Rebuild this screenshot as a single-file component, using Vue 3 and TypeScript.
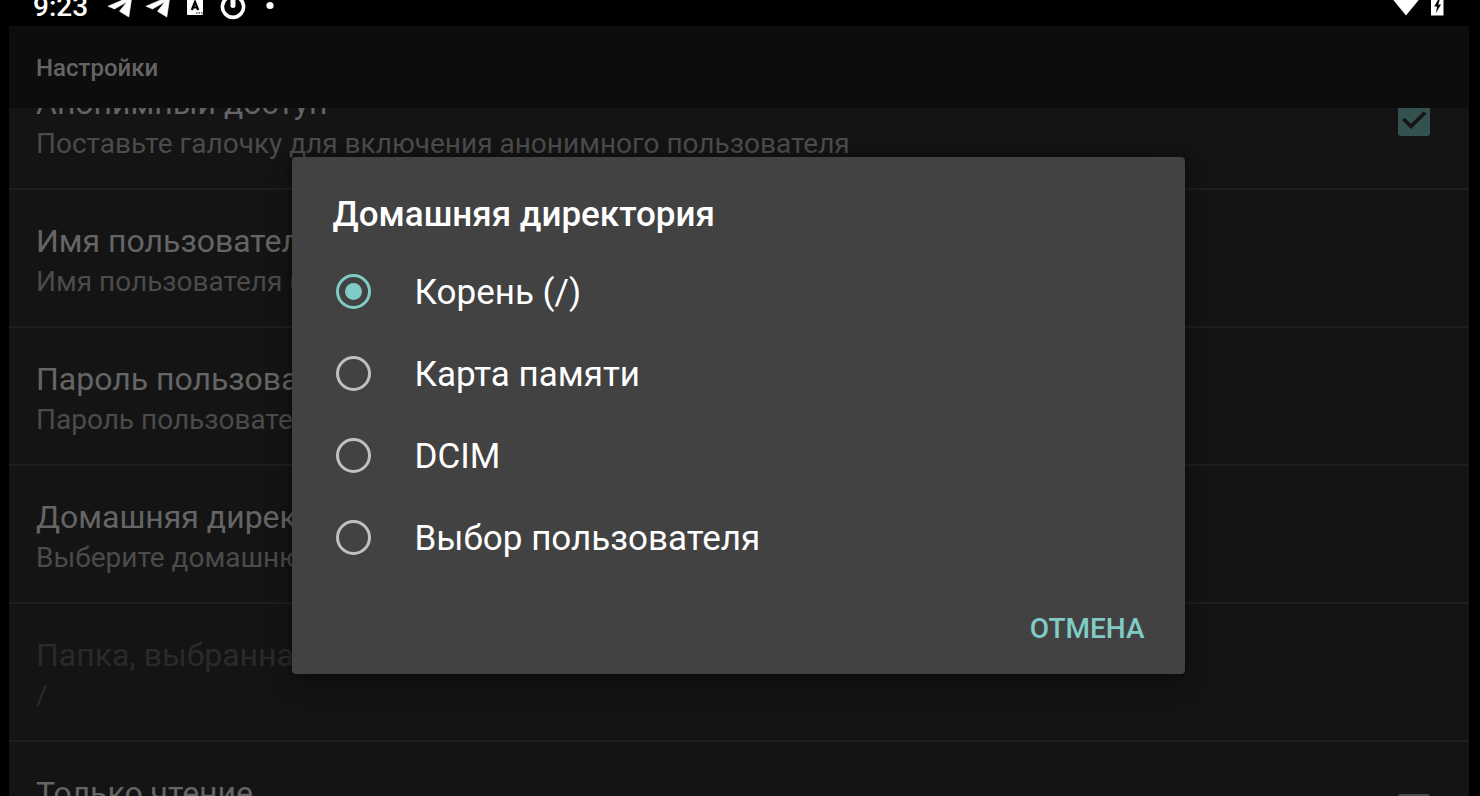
<script setup lang="ts">
import { ref } from 'vue'

interface Preference {
  id: string
  title: string
  summary: string
  toggle?: boolean
  checked?: boolean
  disabled?: boolean
}

const preferences = ref<Preference[]>([
  { id: 'anonymous', title: 'Анонимный доступ', summary: 'Поставьте галочку для включения анонимного пользователя', toggle: true, checked: true },
  { id: 'user', title: 'Имя пользователя', summary: 'Имя пользователя (логин)' },
  { id: 'password', title: 'Пароль пользователя', summary: 'Пароль пользователя' },
  { id: 'home', title: 'Домашняя директория', summary: 'Выберите домашнюю папку' },
  { id: 'folder', title: 'Папка, выбранная', summary: '/', disabled: true },
  { id: 'readonly', title: 'Только чтение', summary: '', toggle: true, checked: false },
])

const directories = ['Корень (/)', 'Карта памяти', 'DCIM', 'Выбор пользователя']
const selected = ref(directories[0])
const open = ref(true)
</script>

<template>
  <div class="screen">
    <header class="status">
      <span class="clock">9:23</span>
      <svg v-for="n in 2" :key="n" class="plane" viewBox="0 0 24 26" aria-hidden="true">
        <path d="M0 6.200 24-4 20.800 17 11.500 11.200 19 1.800 6.500 9Z" fill="#fff" stroke="#fff" stroke-width="0.600" stroke-linejoin="round" />
      </svg>
      <svg class="letter" viewBox="0 0 16 26" aria-hidden="true">
        <path d="M0-4H16V14Q16 15 15 15H1Q0 15 0 14Z" fill="#fff" />
        <path d="M4.800 10 8 2 11.200 10M5.800 7.500H10.200" fill="none" stroke="#000" stroke-width="2.200" />
        <path d="M9 13H10.500M11.500 13H13M14 13H15.500" stroke="#000" stroke-width="1.200" />
      </svg>
      <svg class="power" viewBox="0 0 26 26" aria-hidden="true">
        <path d="M7-2A10.600 10.600 0 1 0 19-2" fill="none" stroke="#fff" stroke-width="3.600" />
        <path d="M13-4V5.500" stroke="#fff" stroke-width="5" stroke-linecap="round" />
      </svg>
      <svg class="dot" viewBox="0 0 8 26" aria-hidden="true"><circle cx="4" cy="5.500" r="3.600" fill="#fff" /></svg>
      <span class="spacer"></span>
      <svg class="wifi" viewBox="0 0 32 26" aria-hidden="true"><path d="M0-4H32L16 15.500Z" fill="#fff" /></svg>
      <svg class="battery" viewBox="0 0 13 26" aria-hidden="true">
        <path d="M0-4H12.500V15.500H0Z" fill="#fff" />
        <path d="M7.500-1 3.200 6.500H6L5 13 10 4.500H7.200L9-1Z" fill="#000" />
      </svg>
    </header>

    <main class="app">
      <div class="appbar"><h1>Настройки</h1></div>
      <div class="viewport">
        <ul class="prefs">
          <li v-for="p in preferences" :key="p.id" class="pref" :class="{ disabled: p.disabled }">
            <div class="texts">
              <label v-if="p.toggle" class="title" :for="p.id">{{ p.title }}</label>
              <span v-else class="title">{{ p.title }}</span>
              <span class="summary">{{ p.summary }}</span>
            </div>
            <span v-if="p.toggle" class="check">
              <input :id="p.id" v-model="p.checked" type="checkbox" />
              <svg v-if="p.checked" viewBox="0 0 32 32" aria-hidden="true">
                <path d="M5.500 15 13 22.500 27 8.500" fill="none" stroke="#141414" stroke-width="3.600" />
              </svg>
            </span>
          </li>
        </ul>
      </div>

      <div v-if="open" class="overlay">
        <form class="dialog" role="dialog" aria-labelledby="dialog-title" @submit.prevent="open = false">
          <h2 id="dialog-title">Домашняя директория</h2>
          <label v-for="d in directories" :key="d" class="option">
            <input v-model="selected" type="radio" name="directory" :value="d" />
            <span>{{ d }}</span>
          </label>
          <div class="actions"><button type="submit">ОТМЕНА</button></div>
        </form>
      </div>
    </main>
  </div>
</template>

<style>
body {
  margin: 0;
  background: #000;
}
</style>

<style scoped>
.screen {
  display: flex;
  flex-direction: column;
  height: 100vh;
  overflow: hidden;
  background: #000;
  color: #fff;
  font-family: Roboto, "Noto Sans", sans-serif;
}
.status {
  display: flex;
  flex: none;
  align-items: flex-end;
  height: 26px;
  padding: 0 36px 0 33px;
  overflow: hidden;
}
.status svg {
  flex: none;
  height: 26px;
}
.clock {
  padding-bottom: 5px;
  margin-right: 20px;
  font-size: 28px;
  font-weight: 500;
  line-height: 28px;
}
.plane { width: 24px; margin-right: 14px; }
.letter { width: 16px; margin: 0 17px 0 3px; }
.power { width: 26px; margin-right: 20px; }
.dot { width: 8px; }
.spacer { flex: 1; }
.wifi { width: 32px; margin-right: 9px; }
.battery { width: 13px; }
.app {
  position: relative;
  display: flex;
  flex: 1;
  flex-direction: column;
  min-height: 0;
  margin: 0 11px 0 9px;
  background: #141414;
}
.appbar {
  display: flex;
  flex: none;
  align-items: center;
  box-sizing: border-box;
  height: 82px;
  padding: 2px 27px 0;
  background: #0d0d0d;
}
h1 {
  margin: 0;
  color: #656565;
  font-size: 24px;
  font-weight: 500;
  line-height: 32px;
}
.viewport {
  flex: 1;
  min-height: 0;
  overflow: hidden;
}
.prefs {
  margin: -56px 0 0;
  padding: 0;
  list-style: none;
}
.pref {
  display: flex;
  align-items: center;
  box-sizing: border-box;
  height: 138px;
  padding: 0 39px 0 27px;
  border-bottom: 2px solid #1e1e1e;
}
.texts {
  display: flex;
  flex: 1;
  flex-direction: column;
  padding-top: 6px;
  white-space: nowrap;
}
.title {
  color: #656565;
  font-size: 32px;
  line-height: 42px;
}
.summary {
  min-height: 40px;
  color: #4b4b4b;
  font-size: 28px;
  line-height: 40px;
}
.disabled .title,
.disabled .summary { color: #2a2a2a; }
.check {
  position: relative;
  width: 32px;
  height: 32px;
}
.check input {
  display: block;
  box-sizing: border-box;
  width: 32px;
  height: 32px;
  margin: 0;
  border: 3px solid #4b4b4b;
  border-radius: 3px;
  appearance: none;
}
.check input:checked {
  border-color: #33514e;
  background: #33514e;
}
.check svg {
  position: absolute;
  inset: 0;
  pointer-events: none;
}
.overlay {
  position: absolute;
  inset: 0;
  display: grid;
  place-items: center;
  padding: 9px 2px 0 0;
}
.dialog {
  box-sizing: border-box;
  width: calc(100% - 64px);
  max-width: 893px;
  border-radius: 4px;
  background: #424242;
  box-shadow: 0 10px 28px rgba(0, 0, 0, 0.3), 0 0 6px rgba(0, 0, 0, 0.4);
}
h2 {
  margin: 0;
  padding: 36px 41px 13px;
  font-size: 35px;
  font-weight: 500;
  line-height: 44px;
}
.option {
  display: flex;
  align-items: center;
  gap: 44px;
  height: 82px;
  padding: 0 44px;
  font-size: 35px;
  line-height: 44px;
}
.option span { padding-top: 4px; }
.option input {
  display: grid;
  flex: none;
  place-items: center;
  box-sizing: border-box;
  width: 35px;
  height: 35px;
  margin: 0;
  border: 3px solid #c0c0c0;
  border-radius: 50%;
  appearance: none;
}
.option input:checked { border-color: #80cbc4; }
.option input:checked::before {
  width: 17px;
  height: 17px;
  border-radius: 50%;
  background: #80cbc4;
  content: "";
}
.actions {
  display: flex;
  justify-content: flex-end;
  padding: 19px 26px 15px;
}
button {
  height: 62px;
  padding: 0 14px;
  border: 0;
  background: none;
  color: #80cbc4;
  font-family: inherit;
  font-size: 28px;
  font-weight: 500;
}
</style>
